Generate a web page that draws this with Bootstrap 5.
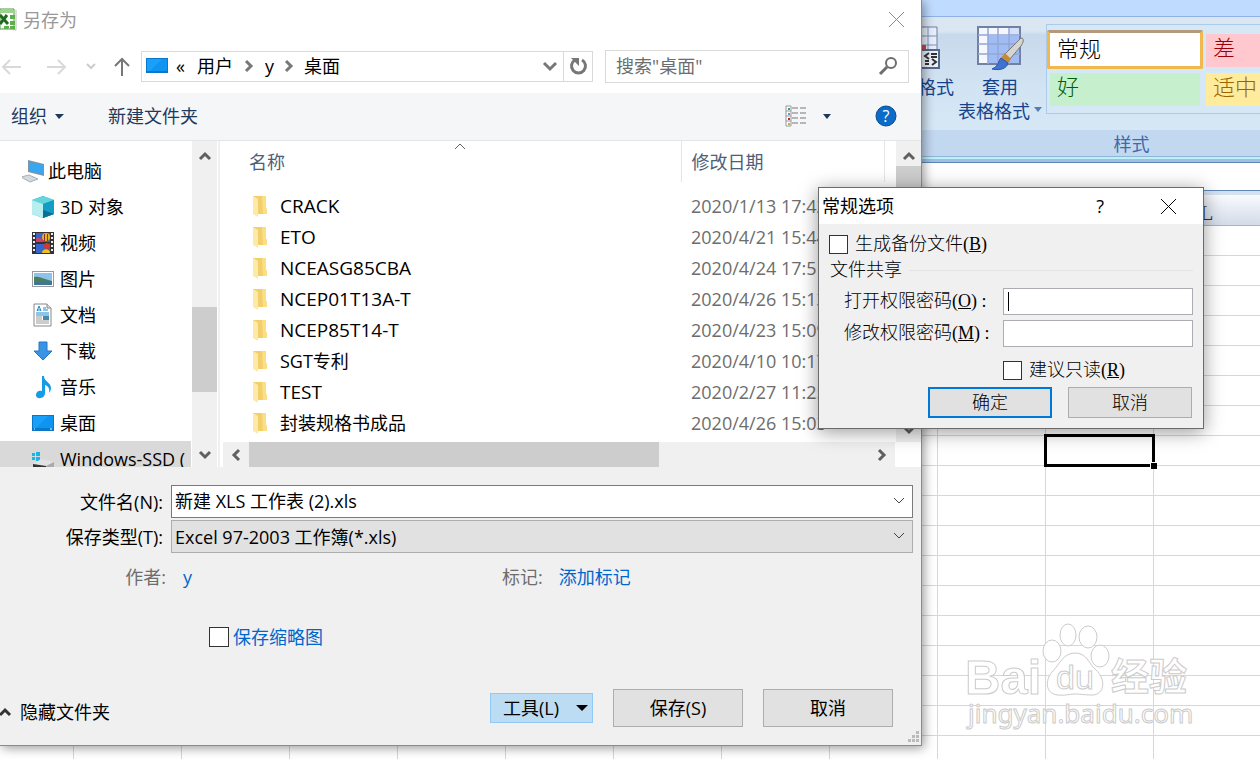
<!DOCTYPE html>
<html lang="zh-CN">
<head>
<meta charset="utf-8">
<meta name="viewport" content="width=device-width, initial-scale=1">
<title>另存为</title>
<link href="https://cdn.jsdelivr.net/npm/bootstrap@5.3.0/dist/css/bootstrap.min.css" rel="stylesheet">
<style>
body{font-family:"Open Sans","Noto Sans CJK SC",sans-serif;font-size:18px;line-height:24px;color:#000;background:#fff}
button{background:none;border:0;padding:0;color:inherit}
svg{display:block;flex:none}
.workspace{min-height:100vh}
/* spreadsheet window */
.strip{height:17px;background:#bfdbff;border-bottom:1px solid #8db2e3}
.ribbon-body{height:113px;background:linear-gradient(#dbe6f3 0,#dbe6f3 14px,#c8d9ed 18px,#d2e3f3 70px,#d6e8f6);color:#15428b}
.big-tool{line-height:24px;padding-top:8px}
.tool-cond{width:76px;padding-right:4px}
.tool-table{width:84px;margin-right:4px;position:relative}
.cond-icon{margin-right:14px}
.gallery{width:214px;height:90px;margin-top:7px;padding:5px 0 0 1px;border:1px solid #abcbeb;border-right:0;background:#d6e7f6;overflow:hidden}
.gallery-row{gap:3px}
.swatch{height:33px;font-size:22px;font-weight:300;line-height:24px;text-align:left;padding:0 0 7px 7px;white-space:nowrap;flex:none}
.sw-normal{width:156px;height:39px;border:3px solid #f2b84b;border-top-color:#b49a7c;border-radius:2px;background:#fff;color:#000;margin-left:-1px;padding-bottom:4px}
.sw-bad{background:#ffc7ce;color:#9c0006;width:60px}
.sw-good{width:150px;background:#c6efce;color:#006100;margin:0 3px 0 2px}
.sw-mid{background:#ffeb9c;color:#9c6500;width:60px}
.ribbon-label{height:33px;background:linear-gradient(#c2d8f0 26px,#8db7da 26px,#8db7da 27px,#bff0f6 27px,#bff0f6 29px,#9fc0e4 29px,#9fc0e4 32px,#5f86b4 32px);color:#3e6aaa}
.label-in{width:257px;line-height:28px;text-align:center}
.formula{height:28px;border-bottom:1px solid #5f86b4}
.col-head{height:35px;border-top:4px solid #d3e1f1;border-bottom:1px solid #9eb6ce;background:linear-gradient(#f8fafd,#d3dbe9);color:#333;font:22px/36px "Liberation Serif","Noto Sans CJK SC",serif}
.col-l{width:60px}
.sheet{min-height:534px;background-image:linear-gradient(to right,transparent 107px,#d0d7e5 107px),linear-gradient(transparent 29px,#d0d7e5 29px);background-size:108px 30px;background-position:right 106px top 0}
.picked{position:absolute;top:434px;right:105px;width:111px;height:33px;border:3px solid #000}
.picked::after{content:"";position:absolute;right:-5px;bottom:-5px;width:7px;height:7px;background:#000;border:1px solid #fff;border-width:1px 0 0 1px}
.watermark{position:absolute;top:615px;right:60px}
/* save dialog */
.save-win{position:absolute;top:0;left:0;right:338px;background:#f0f0f0;border-right:1px solid #8b8b8b;border-bottom:1px solid #8b8b8b;box-shadow:2px 2px 10px rgba(0,0,0,.4)}
.save-title{height:39px;color:#999}
.save-title span{padding-left:6px}
.address-row{height:54px;padding:10px 12px 10px 0}
.nav-arrows{width:141px}
.crumbs{height:31px;border:1px solid #d9d9d9}
.reload{width:29px;align-self:stretch;border-left:1px solid #d9d9d9}
.search-box{width:304px;height:33px;border:1px solid #d9d9d9;padding:0 10px;margin-left:12px}
.search-box input{border:0;outline:0;width:200px;padding:0;background:none;color:#6d6d6d}
.search-box input::placeholder{color:#6d6d6d;opacity:1}
.toolbar-line{height:48px;background:#f5f6f7;border-bottom:1px solid #e5e5e5;color:#1e395b}
.toolbar-line>.d-flex,.toolbar-line button{height:46px}
.organize{margin-left:11px}
.panes{height:326px;background:#fff;overflow:hidden}
.places{width:191px;flex:none;padding-top:12px;overflow:hidden}
.places a{height:36px;padding-left:32px;gap:6px;color:#000;white-space:nowrap;text-decoration:none}
.places a.top{padding-left:22px;gap:4px}
.places a.on{background:#d9d9d9}
.places svg{width:22px;height:24px}
.vbar{width:25px;background:#f0f0f0;flex:none}
.vbar .cap{height:25px}
.thumb{background:#cdcdcd}
.places-bar{margin-left:1px}
.track-gap{height:141px}
.places-thumb{height:85px}
.files-thumb{height:90px}
.h-thumb{width:61%}
.h-cap{width:26px}
.sep{width:5px;border-left:2px solid #f0f0f0;margin-left:1px;flex:none}
.files{table-layout:fixed;width:100%}
.files th{font-weight:400;color:#4c607a;height:41px;padding:0;border-right:1px solid #e5e5e5;position:relative}
.files td{height:31px;padding:0;white-space:nowrap}
.files .w-date{width:203px}
.files .w-rest{width:12px}
.files .c-name{padding-left:26px}
.files td.c-name{font-size:19px}
.files .file-cell{padding-left:4px;gap:12px}
.files .cjk{font-size:18px}
.files .c-date{padding-left:10px}
.files td.c-date{color:#6d6d6d}
.files tbody::before{content:"";display:block;height:8px}
.file-area{height:301px;overflow:hidden}
.sort-mark{position:absolute;top:1px;left:231px}
.hbar{height:25px;background:#f0f0f0;margin-right:26px}
.form-area{padding:18px 8px 0 0}
.name-row{margin-bottom:2px}
.lbl{width:171px;text-align:right;padding-right:8px;flex:none}
.lbl.grey{padding-right:5px}
.author{width:502px}
.combo{position:relative;flex:1}
.combo input,.combo select{width:100%;height:33px;border:1px solid #7a7a7a;background:#fff;padding:0 30px 3px 3px;appearance:none;border-radius:0;color:#000;display:block;outline:0;line-height:24px}
.combo select{border-color:#adadad;background:#e1e1e1;padding-bottom:0}
.combo svg{position:absolute;right:7px;top:12px;pointer-events:none}
.grey{color:#6d6d6d}
.lnk{color:#0066cc;text-decoration:none}
.tick{appearance:none;width:20px;height:20px;border:1px solid #333;background:#fff;margin:0;flex:none;border-radius:0}
.thumb-opt{padding:36px 0 0 209px}
.push{border:1px solid #adadad;background:#e1e1e1;height:38px;width:130px}
.push.tools{width:103px;height:30px;background:#bcdcf4;border-color:#90c8f6}
.foot{padding:40px 28px 18px 0}
.grip{position:absolute;right:2px;bottom:2px}
/* options dialog */
.opt-win{position:absolute;top:187px;right:56px;width:386px;border:1px solid #6b6b6b;background:#f0f0f0;box-shadow:0 3px 18px rgba(0,0,0,.4);font-family:"Liberation Serif","Noto Sans CJK SC",serif}
.opt-title{height:36px;background:#fff;padding:0 26px 0 3px;font-family:"Open Sans","Noto Sans CJK SC",sans-serif}
.opt-body{padding:8px 10px 10px;font-weight:300}
.opt-body .tick{width:19px;height:19px}
.opt-body .gap-tick{gap:7px}
.opt-body .push{width:124px;height:31px;font-weight:300}
.opt-body .push.ok{border:2px solid #0078d7}
.opt-buttons{margin-top:5px;padding-right:1px}
.grp{height:28px}
.grp legend{float:none;width:auto;font-size:18px;line-height:24px;margin:0;padding:0 7px 0 1px}
.grp hr{flex:1;margin:0;color:#bbb}
.field{height:32px;padding-left:15px}
.first-field{margin-top:1px}
.field input{width:190px;height:27px;border:1px solid #abadb3;border-radius:0;background:#fff;padding:0 8px;outline:0}
.read-only{padding:9px 0 0 174px}
.caret-box{position:relative}
.caret-box::after{content:"";position:absolute;left:5px;top:4px;width:1px;height:19px;background:#000}
</style>
</head>
<body>
<div class="workspace position-relative overflow-hidden">

  <!-- spreadsheet behind the dialogs -->
  <div class="strip"></div>
  <div class="ribbon-body d-flex justify-content-end align-items-start">
    <button class="big-tool tool-cond d-flex flex-column align-items-end">
      <svg class="cond-icon" width="28" height="50" viewBox="0 0 28 50"><path d="M-5 2h30v30H-5z" fill="#e8effb" stroke="#6d7fa0"/><path d="M0 11h25M0 20h25M16 2v30" stroke="#7f93c0" fill="none"/><path d="M8 20h6v5H8z" fill="#c94a3a"/><path d="M9 25h18v18H9z" fill="#eef3fb" stroke="#53698f" stroke-width="2"/><path d="m17 28-4 3 4 3M13 36h4M13 39h4M19 29h6M19 32h6M20 34l4 3-4 3" stroke="#333" stroke-width="2" fill="none"/></svg>
      <span class="text-nowrap">条件格式</span>
    </button>
    <button class="big-tool tool-table d-flex flex-column align-items-center">
      <svg width="48" height="50" viewBox="0 0 48 50"><path d="M2 2h42v37H2z" fill="#f4f7fd" stroke="#71819f" stroke-width="2"/><path d="M12 11h31v27H12z" fill="#9fbcf5"/><path d="M33 3h10v8H33z" fill="#d5e1fa"/><path d="M2 10h42M2 19h42M2 29h42M12 3v36M22 3v36M33 3v36" stroke="#93a6d4" stroke-width="1.5" fill="none"/><path d="M45 13c4 0 2 5 0 8L34 34l-5-5z" fill="#d5d5d2" stroke="#777"/><path d="m29 28 6 6-4 5-7-5z" fill="#c58a35"/><path d="M25 33c-3 3-2 8-9 11 9 2 15-1 16-6z" fill="#3e73d1" stroke="#2d56a8"/></svg>
      <span>套用</span>
      <span class="d-flex align-items-center gap-1 text-nowrap">表格格式<svg width="8" height="8"><path d="M0 0h8L4 5z" fill="#567db1"/></svg></span>
    </button>
    <div class="gallery d-flex flex-column gap-1">
      <div class="gallery-row d-flex"><button class="swatch sw-normal">常规</button><button class="swatch sw-bad mt-1">差</button></div>
      <div class="gallery-row d-flex"><button class="swatch sw-good">好</button><button class="swatch sw-mid">适中</button></div>
    </div>
  </div>
  <div class="ribbon-label d-flex justify-content-end"><div class="label-in">样式</div></div>
  <div class="formula"></div>
  <div class="col-head d-flex justify-content-end"><div class="col-l">L</div></div>
  <div class="sheet"></div>
  <div class="picked"></div>

  <svg class="watermark" width="236" height="122" viewBox="0 0 236 122" fill="#fff" fill-opacity=".9" stroke="#cbcbcb">
    <ellipse cx="88" cy="36" rx="9" ry="11"/><ellipse cx="104" cy="20" rx="8" ry="11"/><ellipse cx="124" cy="22" rx="9" ry="11"/><ellipse cx="136" cy="41" rx="9" ry="11"/>
    <path d="M111 38c12 0 13 10 21 17 10 9 9 25-4 25-8 0-10-1-17-1s-10 2-17 1c-13-1-13-15-6-23 8-8 11-19 23-19z"/>
    <text x="1" y="79" font-family="Liberation Sans,sans-serif" font-weight="700" font-size="49">Bai</text>
    <text x="92" y="74" font-family="Liberation Sans,sans-serif" font-size="34">du</text>
    <text x="147" y="75" font-family="Noto Sans CJK SC,sans-serif" font-weight="700" font-size="38">经验</text>
    <text x="4" y="108" font-family="Noto Sans,sans-serif" font-size="26">jingyan.baidu.com</text>
  </svg>

  <!-- save as -->
  <section class="save-win" aria-label="另存为">
    <div class="bg-white">
      <div class="save-title d-flex align-items-center">
        <svg width="17" height="24" viewBox="0 0 17 24"><path d="M0 1h14v20H0z" fill="#fff" stroke="#4c9a3d"/><path d="M0 2h14v3H0z" fill="#9bd48a"/><path d="m0 7 8 9M7 7l-7 9" stroke="#1f6b1f" stroke-width="3"/><path d="M10 7h5v4h-5zM10 13h5v4h-5zM4 18h5v3H4zM10 18h5v4h-5z" fill="#5fae4d"/><path d="M16 2v20l-8-1" fill="none" stroke="#bbb"/></svg>
        <span>另存为</span>
        <button class="ms-auto me-3" aria-label="关闭"><svg width="17" height="17"><path d="m1 1 15 15M16 1 1 16" stroke="#8a8a8a" fill="none"/></svg></button>
      </div>
      <div class="address-row d-flex align-items-center">
        <div class="nav-arrows d-flex align-items-center">
          <button aria-label="后退"><svg width="22" height="18"><path d="M21 10H3m7-7-7 7 7 7" fill="none" stroke="#d9d9d9" stroke-width="2"/></svg></button>
          <button class="ms-4" aria-label="前进"><svg width="22" height="18"><path d="M1 10h18m-7-7 7 7-7 7" fill="none" stroke="#d9d9d9" stroke-width="2"/></svg></button>
          <button class="ms-3" aria-label="历史"><svg width="14" height="10"><path d="m3 3 4 4 4-4" fill="none" stroke="#ccc" stroke-width="2"/></svg></button>
          <button class="ms-3" aria-label="上移"><svg width="18" height="20"><path d="M8 20V3M1 10l7-7 7 7" fill="none" stroke="#777" stroke-width="2"/></svg></button>
        </div>
        <div class="crumbs d-flex align-items-center flex-fill ps-1">
          <svg class="me-2" width="22" height="18"><path d="M0 1h22v15H0z" fill="#0a78c8"/><path d="M1 2h20v12H1z" fill="#19a0fa"/><path d="M16 2h5v12H4z" fill="#0f94f2"/></svg>
          <span>«</span><a class="text-black text-decoration-none ps-2 ms-1" href="#">用户</a>
          <svg class="mx-2" width="16" height="14"><path d="m5 2 5 5-5 5" fill="none" stroke="#777" stroke-width="3"/></svg>
          <a class="text-black text-decoration-none" href="#">y</a>
          <svg class="mx-1" width="22" height="14"><path d="m8 2 5 5-5 5" fill="none" stroke="#777" stroke-width="3"/></svg>
          <a class="text-black text-decoration-none" href="#">桌面</a>
          <button class="ms-auto me-1" aria-label="展开"><svg width="18" height="14"><path d="m3 4 6 6 6-6" fill="none" stroke="#777" stroke-width="3"/></svg></button>
          <button class="reload d-flex align-items-center justify-content-center" aria-label="刷新"><svg width="20" height="20"><path d="M14 4a7 7 0 1 1-7 0" fill="none" stroke="#777" stroke-width="3"/><path d="M3 2h8v8L8 7z" fill="#777"/></svg></button>
        </div>
        <div class="search-box d-flex align-items-center justify-content-between">
          <input type="text" placeholder='搜索"桌面"' aria-label="搜索">
          <svg width="20" height="20"><circle cx="13" cy="7" r="5" fill="none" stroke="#6d6d6d" stroke-width="2"/><path d="m9 11-7 7" stroke="#6d6d6d" stroke-width="3"/></svg>
        </div>
      </div>
    </div>
    <div class="toolbar-line d-flex justify-content-between">
      <div class="d-flex align-items-center">
        <button class="organize d-flex align-items-center gap-2 me-4">组织<svg width="9" height="5"><path d="M0 0h9L4 5z" fill="#1e395b"/></svg></button>
        <button class="ms-3 ps-1">新建文件夹</button>
      </div>
      <div class="d-flex align-items-center pe-4">
        <button class="d-flex align-items-center gap-3" aria-label="视图"><svg width="22" height="22"><path d="M1 1h5v20H1zM1 6h5M1 11h5M1 16h5" fill="#fff" stroke="#999"/><path d="M7 3h14M7 8h14M7 13h14M7 18h14" stroke="#777" stroke-dasharray="6 2"/><path d="M3 3h2v2H3z" fill="#2a9"/><path d="M3 8h2v2H3z" fill="#69b"/><path d="M3 13h2v2H3z" fill="#c22"/><path d="M3 18h2v2H3z" fill="#ba5"/></svg><svg width="8" height="5"><path d="M0 0h8L4 5z" fill="#1e395b"/></svg></button>
        <button class="ms-4 ps-3" aria-label="帮助"><svg class="ms-1" width="22" height="22"><circle cx="11" cy="11" r="10" fill="#0a6bc9" stroke="#0a4a90"/><text x="11" y="17" text-anchor="middle" font-size="16" fill="#fff">?</text></svg></button>
      </div>
    </div>

    <div class="panes d-flex">
      <nav class="places">
        <a href="#" class="top d-flex align-items-center"><svg viewBox="0 0 22 24"><path d="m6 1 16 4v12L6 13z" fill="#7e93a6"/><path d="m7 3 14 3v9L7 12z" fill="#37a7f2"/><path d="m-1 18 8-2 9 4-8 3z" fill="#d5dade" stroke="#a7afb6"/></svg>此电脑</a>
        <a href="#" class="d-flex align-items-center"><svg viewBox="0 0 22 24"><path d="m11 1 11 4v14l-11 4-11-4V5z" fill="#1fa9c4"/><path d="m11 1 11 4-11 4L0 5z" fill="#63d6dd"/><path d="m0 5 11 4v14L0 19z" fill="#b9eeee"/><path d="m22 5-11 4v14l11-4z" fill="#139cc4"/><path d="m22 19-11-4v8z" fill="#0d6e93"/></svg>3D 对象</a>
        <a href="#" class="d-flex align-items-center"><svg viewBox="0 0 22 24"><path d="M0 1h22v22H0z" fill="#333"/><path d="M4 2h14v9H4zM4 13h14v9H4z" fill="#3766c8"/><path d="M2 2v20M20 2v20" stroke="#eee" stroke-width="2" stroke-dasharray="2 2"/><path d="M4 8c3-4 5 1 7 1v2H4z" fill="#d63c68"/><circle cx="14" cy="6" r="4" fill="#e8b21c"/><path d="M12 3h1v7h-1zM15 3h1v7h-1z" fill="#8a3520"/><circle cx="15" cy="15" r="3" fill="#cf3a2e"/><path d="M10 22c0-5 8-5 8 0z" fill="#f0c020"/></svg>视频</a>
        <a href="#" class="d-flex align-items-center"><svg viewBox="0 0 22 24"><path d="M0 4h22v16H0z" fill="#9b9b9b"/><path d="M1 5h20v14H1z" fill="#fff"/><path d="M2 6h18v12H2z" fill="#8ec3f0"/><path d="M2 10c5-1 9 2 18 4v1H2z" fill="#4a7f58"/><path d="M2 15h18v3H2z" fill="#3e7599"/></svg>图片</a>
        <a href="#" class="d-flex align-items-center"><svg viewBox="0 0 22 24"><path d="M2 1h13l4 4v18H2z" fill="#fff" stroke="#888"/><path d="M15 1v4h4" fill="#ddd" stroke="#888"/><path d="m5 8 2-5 2 5M5 7h4M11 5h3M11 7h5M4 10h13M4 12h13" stroke="#1d88cc" fill="none"/><path d="M4 14h6M4 16h6M4 18h13M4 20h13" stroke="#999"/><path d="M11 13h6v4h-6z" fill="#4a88a8"/></svg>文档</a>
        <a href="#" class="d-flex align-items-center"><svg viewBox="0 0 22 24"><path d="M7 3h8v9h5l-9 9-9-9h5z" fill="#3a94e4" stroke="#2277c8"/></svg>下载</a>
        <a href="#" class="d-flex align-items-center"><svg viewBox="0 0 22 24"><path d="M10 1h2c0 6 7 6 7 12 0 2-1 4-2 5 1-5-1-7-4-8v8c0 6-9 7-9 2 0-4 4-5 6-4z" fill="#159be8"/></svg>音乐</a>
        <a href="#" class="d-flex align-items-center"><svg viewBox="0 0 22 24"><path d="M0 4h22v16H0z" fill="#0a78c8"/><path d="M1 5h20v12H1z" fill="#19a0fa"/><path d="M16 5h5v12H4z" fill="#0f94f2"/><path d="M2 18h1M18 18h2" stroke="#fff"/></svg>桌面</a>
        <a href="#" class="on d-flex align-items-center"><svg viewBox="0 0 22 24"><path d="M0 6h3v3H0zM4 5h4v4H4zM0 10h3v3H0zM4 10h4v4H4z" fill="#19b5e8"/><path d="m1 17 8-5 13 3-8 4z" fill="#e2e2e2"/><path d="m1 17 13 2v7H1z" fill="#333"/><path d="m22 15-8 4v7h8z" fill="#aaa"/></svg>Windows-SSD (</a>
      </nav>
      <div class="vbar places-bar d-flex flex-column">
        <div class="cap d-flex justify-content-center align-items-center pt-1"><svg width="14" height="10"><path d="m2 8 5-5 5 5" fill="none" stroke="#606060" stroke-width="3"/></svg></div>
        <div class="track-gap"></div><div class="thumb places-thumb"></div>
        <div class="cap d-flex justify-content-center align-items-center mt-auto"><svg width="14" height="10"><path d="m2 2 5 5 5-5" fill="none" stroke="#606060" stroke-width="3"/></svg></div>
      </div>
      <div class="sep"></div>
      <div class="flex-fill overflow-hidden">
        <div class="d-flex file-area">
          <div class="flex-fill overflow-hidden">
            <table class="files">
              <colgroup><col><col class="w-date"><col class="w-rest"></colgroup>
              <thead><tr><th class="c-name">名称<svg class="sort-mark" width="13" height="8"><path d="m1 7 5-5 5 5" fill="none" stroke="#606060"/></svg></th><th class="c-date">修改日期</th><th class="border-0"></th></tr></thead>
              <tbody id="rows"></tbody>
            </table>
          </div>
          <div class="vbar d-flex flex-column">
            <div class="cap d-flex justify-content-center align-items-center pt-1"><svg width="14" height="10"><path d="m2 8 5-5 5 5" fill="none" stroke="#606060" stroke-width="3"/></svg></div>
            <div class="thumb files-thumb"></div>
            <div class="cap d-flex justify-content-center align-items-center mt-auto"><svg width="14" height="10"><path d="m2 2 5 5 5-5" fill="none" stroke="#606060" stroke-width="3"/></svg></div>
          </div>
        </div>
        <div class="hbar d-flex align-items-center">
          <div class="h-cap d-flex justify-content-center"><svg width="10" height="14"><path d="M8 2 3 7l5 5" fill="none" stroke="#606060" stroke-width="3"/></svg></div>
          <div class="thumb h-thumb align-self-stretch"></div>
          <div class="h-cap d-flex justify-content-center ms-auto"><svg width="10" height="14"><path d="m2 2 5 5-5 5" fill="none" stroke="#606060" stroke-width="3"/></svg></div>
        </div>
      </div>
    </div>

    <div class="form-area">
      <div class="name-row d-flex align-items-center"><label class="lbl" for="fname">文件名(N):</label>
        <div class="combo"><input id="fname" type="text" value="新建 XLS 工作表 (2).xls"><svg width="13" height="9"><path d="m1 1 5 5 5-5" fill="none" stroke="#444"/></svg></div></div>
      <div class="d-flex align-items-center"><label class="lbl" for="ftype">保存类型(T):</label>
        <div class="combo"><select id="ftype"><option>Excel 97-2003 工作簿(*.xls)</option></select><svg width="13" height="9"><path d="m1 1 5 5 5-5" fill="none" stroke="#444"/></svg></div></div>
      <div class="d-flex mt-2 pt-1"><div class="author d-flex"><span class="lbl grey">作者:</span><a class="lnk ps-2 ms-1" href="#">y</a></div><span class="grey">标记:</span><a class="lnk ms-3" href="#">添加标记</a></div>
    </div>
    <div class="thumb-opt d-flex align-items-center"><input class="tick" type="checkbox" id="thumbs"><label class="lnk ps-1" for="thumbs">保存缩略图</label></div>
    <div class="foot d-flex align-items-center">
      <button class="d-flex align-items-center gap-2 pt-2"><svg width="12" height="10"><path d="m0 8 5-5 5 5" fill="none" stroke="#333" stroke-width="3"/></svg>隐藏文件夹</button>
      <button class="push tools ms-auto me-3 d-flex align-items-center justify-content-between ps-2 pe-1"><span class="ps-1">工具(L)</span><svg width="12" height="6"><path d="M0 0h12L6 6z"/></svg></button>
      <button class="push me-3 ms-1">保存(S)</button>
      <button class="push ms-1">取消</button>
    </div>
    <svg class="grip" width="12" height="12"><path d="M9 0h3v3H9zM5 4h3v3H5zM9 4h3v3H9zM1 8h3v3H1zM5 8h3v3H5zM9 8h3v3H9z" fill="#bbb"/></svg>
  </section>

  <!-- general options -->
  <section class="opt-win" aria-label="常规选项">
    <div class="opt-title d-flex align-items-center"><span>常规选项</span>
      <button class="ms-auto me-5 pe-1" aria-label="帮助">?</button>
      <button class="ms-1" aria-label="关闭"><svg width="17" height="17"><path d="m1 1 15 15M16 1 1 16" stroke="#000" fill="none"/></svg></button></div>
    <div class="opt-body">
      <div class="gap-tick d-flex align-items-center"><input class="tick" type="checkbox" id="bak"><label for="bak">生成备份文件(<u>B</u>)</label></div>
      <fieldset>
        <div class="grp d-flex align-items-center"><legend>文件共享</legend><hr></div>
        <div class="field first-field d-flex align-items-center justify-content-between"><label for="p1">打开权限密码(<u>O</u>)&nbsp;:</label><span class="caret-box d-flex"><input id="p1" type="password"></span></div>
        <div class="field d-flex align-items-center justify-content-between"><label for="p2">修改权限密码(<u>M</u>)&nbsp;:</label><input id="p2" type="password"></div>
      </fieldset>
      <div class="read-only gap-tick d-flex align-items-center"><input class="tick" type="checkbox" id="ro"><label for="ro">建议只读(<u>R</u>)</label></div>
      <div class="opt-buttons d-flex justify-content-end gap-3"><button class="push ok">确定</button><button class="push">取消</button></div>
    </div>
  </section>
</div>
<script>
const files=[["CRACK","2020/1/13 17:42"],["ETO","2020/4/21 15:44"],["NCEASG85CBA","2020/4/24 17:51"],["NCEP01T13A-T","2020/4/26 15:13"],["NCEP85T14-T","2020/4/23 15:09"],["SGT专利","2020/4/10 10:17"],["TEST","2020/2/27 11:25"],["封装规格书成品","2020/4/26 15:03"]];
const folder='<svg width="15" height="22" viewBox="0 0 15 22"><path d="M0 1h13v12l1 1v5H4z" fill="#f2cf6b"/><path d="M9 1h4v12l1 1v5h-4z" fill="#fbdf85"/><path d="m0 1 5 3v18l-5-3z" fill="#ffe9a6"/></svg>';
document.getElementById("rows").innerHTML=files.map(f=>`<tr><td class="c-name"><span class="file-cell d-flex align-items-center">${folder}<span class="${/[^\x00-\x7f]/.test(f[0])?"cjk":""}">${f[0]}</span></span></td><td class="c-date">${f[1]}</td><td></td></tr>`).join("");
</script>
<script src="https://cdn.jsdelivr.net/npm/bootstrap@5.3.0/dist/js/bootstrap.bundle.min.js"></script>
</body>
</html>
